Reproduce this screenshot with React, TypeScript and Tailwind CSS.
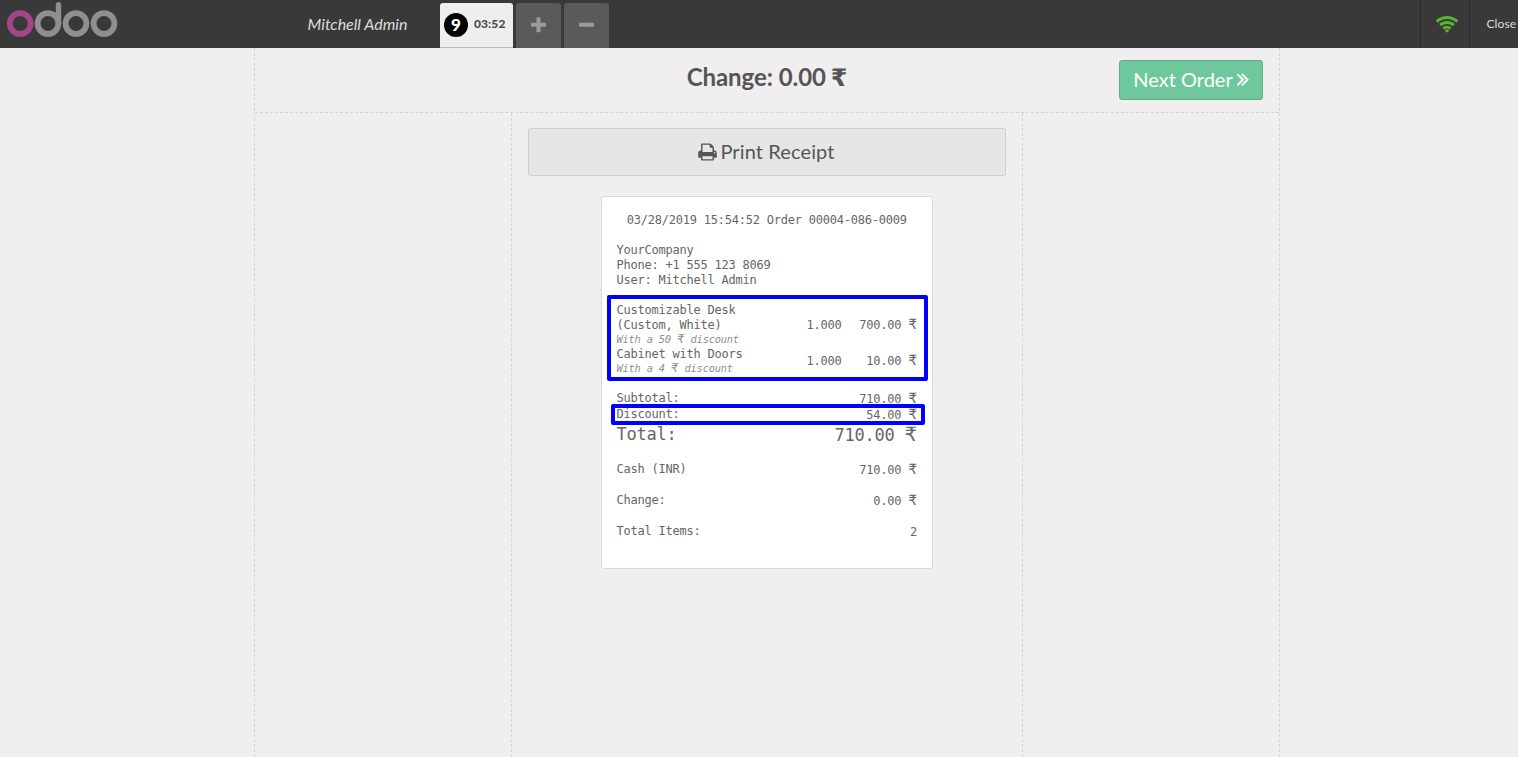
import React from 'react';

function Logo() {
  return (
    <svg width="124" height="48" viewBox="0 0 124 48" fill="none" strokeWidth="5.8" aria-label="odoo">
      <g stroke="#8f8f8f">
        <circle cx="48" cy="23.5" r="10.4" />
        <circle cx="76" cy="23.5" r="10.4" />
        <circle cx="104" cy="23.5" r="10.4" />
        <path d="M58.5 4.8V23.5" strokeWidth="5.4" strokeLinecap="round" />
      </g>
      <circle cx="20.2" cy="23.5" r="10.4" stroke="#a24689" />
    </svg>
  );
}

const PLUS =
  'M1600 736v192q0 40-28 68t-68 28h-416v416q0 40-28 68t-68 28h-192q-40 0-68-28t-28-68v-416h-416q-40 0-68-28t-28-68v-192q0-40 28-68t68-28h416v-416q0-40 28-68t68-28h192q40 0 68 28t28 68v416h416q40 0 68 28t28 68z';
const MINUS = 'M1600 736v192q0 40-28 68t-68 28h-1216q-40 0-68-28t-28-68v-192q0-40 28-68t68-28h1216q40 0 68 28t28 68z';
const PRINT =
  'M448 1536h896v-256h-896v256zm0-640h896v-384h-160q-40 0-68-28t-28-68v-160h-640v640zm1152 64q0-26-19-45t-45-19-45 19-19 45 19 45 45 19 45-19 19-45zm128 0v416q0 13-9.5 22.5t-22.5 9.5h-224v160q0 40-28 68t-68 28h-960q-40 0-68-28t-28-68v-160h-224q-13 0-22.5-9.5t-9.5-22.5v-416q0-79 56.5-135.5t135.5-56.5h64v-544q0-40 28-68t68-28h672q40 0 88 20t76 48l152 152q28 28 48 76t20 88v256h64q79 0 135.5 56.5t56.5 135.5z';
const NEXT =
  'M979 960q0 13-10 23l-466 466q-10 10-23 10t-23-10l-50-50q-10-10-10-23t10-23l393-393-393-393q-10-10-10-23t10-23l50-50q10-10 23-10t23 10l466 466q10 10 10 23zm384 0q0 13-10 23l-466 466q-10 10-23 10t-23-10l-50-50q-10-10-10-23t10-23l393-393-393-393q-10-10-10-23t10-23l50-50q10-10 23-10t23 10l466 466q10 10 10 23z';

function Wifi() {
  return (
    <svg width="24" height="18" viewBox="0 0 24 18" fill="none" stroke="#5ab534" strokeWidth="3">
      <path d="M1.7 6.7Q6 2.6 12 2.6T22.3 6.7" />
      <path d="M5.2 10.2Q8 7.5 12 7.5T18.8 10.2" />
      <path d="M8.4 13.6Q10 12.1 12 12.1T15.6 13.6" strokeWidth="2.7" />
      <path d="M9.7 15.3Q12 13.8 14.3 15.3L12 17.8Z" fill="#5ab534" stroke="none" />
    </svg>
  );
}

function Header() {
  return (
    <header className="flex h-12 shrink-0 overflow-hidden bg-[#393939] text-[#ddd]">
      <div className="w-[307.5px]">
        <Logo />
      </div>
      <div className="w-[132.5px] text-[16px] leading-[48px] italic">Mitchell Admin</div>
      <div className="flex items-end gap-[3px]">
        <div className="flex h-[45px] w-[73px] items-center rounded-t-[3px] border-b border-[#bbb] bg-[#eee] pl-1 text-[#4c4c4c]">
          <span className="flex size-6 items-center justify-center rounded-full bg-black text-[17px] leading-6 font-black text-white">9</span>
          <span className="ml-[6px] pb-[2px] text-[12px] font-black tracking-[0.1px]">03:52</span>
        </div>
        {[PLUS, MINUS].map((path) => (
          <button key={path} className="flex h-[45px] w-[45px] items-center justify-center rounded-t-[3px] bg-[#5a5a5a]">
            <svg width="19" height="19" viewBox="0 0 1792 1792" fill="#9b9b9b">
              <path d={path} />
            </svg>
          </button>
        ))}
      </div>
      <div className="ml-auto flex">
        <div className="flex w-[49px] items-center justify-center border-l border-[#292929] pl-[3px]">
          <Wifi />
        </div>
        <div className="w-[49px] border-l border-[#292929] pl-[16.5px] text-[12px] leading-[48px] tracking-[0.1px] whitespace-nowrap">Close</div>
      </div>
    </header>
  );
}

function Money({ text }: { text: string }) {
  const [before, after] = text.split('₹');
  if (after === undefined) return <>{text}</>;
  return (
    <>
      {before}
      <span className="font-['DejaVu_Sans',sans-serif] text-[1.16em] leading-none tracking-normal">₹</span>
      {after}
    </>
  );
}

function Line({ label, value, className = 'h-4 leading-4' }: { label: string; value: string; className?: string }) {
  return (
    <div className={`flex justify-between ${className}`}>
      <span>{label}</span>
      <span className="pt-px">
        <Money text={value} />
      </span>
    </div>
  );
}

function Item({ name, note, qty, price, className }: { name: string[]; note: string; qty: string; price: string; className: string }) {
  return (
    <div className={`flex items-center ${className}`}>
      <div className="w-[150px]">
        {name.map((part) => (
          <div key={part} className="h-[15px] leading-[15px]">{part}</div>
        ))}
        <div className="h-[14px] text-[10.4px] leading-[12px] tracking-[-0.22px] text-[#909090] italic">
          <Money text={note} />
        </div>
      </div>
      <div className="w-[75px] text-right">{qty}</div>
      <div className="flex-1 text-right">
        <Money text={price} />
      </div>
    </div>
  );
}

function Receipt() {
  return (
    <div className="relative mx-auto mt-5 h-[373px] w-[332px] rounded-[3px] border border-[#dadada] bg-white pt-4 pr-[15px] pl-[14.5px] font-['DejaVu_Sans_Mono',monospace] text-[12px] leading-[15px] tracking-[-0.225px] whitespace-pre text-[#666]">
      <div className="mb-[15px] text-center">03/28/2019 15:54:52 Order 00004-086-0009</div>
      <div>YourCompany</div>
      <div>Phone: +1 555 123 8069</div>
      <div className="mb-[15px]">User: Mitchell Admin</div>
      <Item className="h-11" name={['Customizable Desk', '(Custom, White)']} note="With a 50 ₹ discount" qty="1.000" price="700.00 ₹" />
      <Item className="h-[29px]" name={['Cabinet with Doors']} note="With a 4 ₹ discount" qty="1.000" price="10.00 ₹" />
      <div className="mt-[14px]">
        <Line label="Subtotal:" value="710.00 ₹" />
        <Line label="Discount:" value="54.00 ₹" />
        <Line label="Total:" value="710.00 ₹" className="h-6 text-[17px] leading-6" />
      </div>
      <Line label="Cash (INR)" value="710.00 ₹" className="mt-[15px] h-4 leading-4" />
      <Line label="Change:" value="0.00 ₹" className="mt-[15px] h-4 leading-4" />
      <Line label="Total Items:" value="2" className="mt-[15px] h-4 leading-4" />
      <div className="absolute top-[98px] left-[5px] h-[86px] w-[321px] rounded-[2px] border-4 border-[#0000fe]" />
      <div className="absolute top-[207px] left-[9px] h-[21px] w-[314px] rounded-[2px] border-4 border-[#0000fe]" />
    </div>
  );
}

export default function App() {
  return (
    <div className="flex h-[757px] w-[1518px] flex-col overflow-hidden bg-[#f0eeee] font-['Lato',sans-serif] text-[#555]">
      <Header />
      <main className="ml-[254px] flex w-[1026px] flex-1 flex-col border-x border-dashed border-[#d5d3d3]">
        <div className="grid h-[65px] grid-cols-[1fr_auto_1fr] border-b border-dashed border-[#d5d3d3]">
          <h1 className="col-start-2 pt-[11px] text-[24px] leading-9 font-bold tracking-[-0.05px]">
            Change: 0.00 <span className="-ml-px font-['DejaVu_Sans',sans-serif] leading-none">₹</span>
          </h1>
          <button className="mt-3 mr-4 flex h-10 w-36 items-center justify-center gap-1 justify-self-end rounded-[3px] border border-[#64af8a] bg-[#6ec89b] pb-[2px] text-[20px] text-white">
            Next Order
            <svg width="12" height="20" viewBox="400 64 1000 1667" fill="currentColor" stroke="currentColor" strokeWidth="40">
              <path d={NEXT} />
            </svg>
          </button>
        </div>
        <div className="flex flex-1">
          <div className="w-64" />
          <section className="w-[512px] border-x border-dashed border-[#d5d3d3] px-4 pt-[15px]">
            <button className="flex h-12 w-full items-center justify-center gap-[3px] rounded-[3px] border border-[#cecece] bg-[#e6e6e6] pr-px pb-[2px] text-[20px] tracking-[0.12px]">
              <svg width="19" height="20" viewBox="64 -90 1664 1792" fill="currentColor">
                <path d={PRINT} />
              </svg>
              Print Receipt
            </button>
            <Receipt />
          </section>
        </div>
      </main>
    </div>
  );
}
